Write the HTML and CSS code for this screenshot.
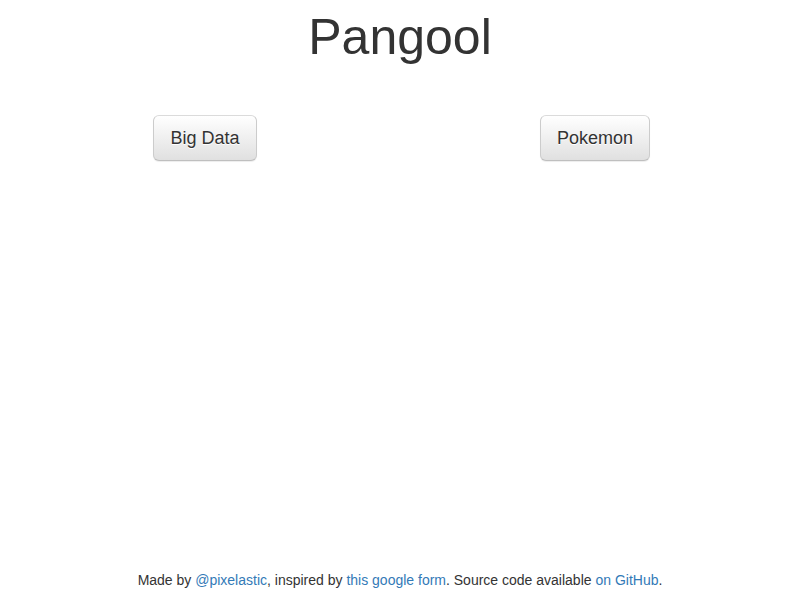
FILE: index.html
```html
<!DOCTYPE html>
<html lang="en">
<head>
<meta charset="utf-8">
<title>Pangool</title>
<link rel="stylesheet" href="styles.css">
</head>
<body>
<div class="page">
  <h1 class="title">Pangool</h1>
  <div class="choices">
    <div class="choice"><button class="btn">Big Data</button></div>
    <div class="choice"><button class="btn">Pokemon</button></div>
  </div>
  <footer class="footer">
    Made by <a href="#">@pixelastic</a>, inspired by <a href="#">this google form</a>. Source code available <a href="#">on GitHub</a>.
  </footer>
</div>
</body>
</html>
```

FILE: styles.css
```css
html, body {
  margin: 0;
  padding: 0;
  height: 100%;
  background: #fff;
}
body {
  font-family: "Liberation Sans", Arial, Helvetica, sans-serif;
  font-size: 14px;
  line-height: 1.428571;
  color: #333;
}
.page {
  height: 100%;
  display: flex;
  flex-direction: column;
}
.title {
  margin: 10px 0 0;
  font-size: 50px;
  font-weight: 400;
  line-height: 1.1;
  text-align: center;
  color: #333;
}
.choices {
  width: 780px;
  margin: 50px auto 0;
  display: grid;
  grid-template-columns: 1fr 1fr;
}
.choice {
  display: flex;
  justify-content: center;
}
.btn {
  font-family: inherit;
  font-size: 18px;
  line-height: 24px;
  padding: 10px 16px;
  color: #333;
  border: 1px solid #ccc;
  border-color: #dbdbdb #ccc #bfbfbf;
  border-radius: 6px;
  background-image: linear-gradient(to bottom, #fff 0%, #e0e0e0 100%);
  box-shadow: inset 0 1px 0 rgba(255,255,255,.15), 0 1px 1px rgba(0,0,0,.075);
  text-shadow: 0 1px 0 #fff;
  cursor: pointer;
}
.footer {
  margin-top: auto;
  padding-bottom: 9px;
  text-align: center;
}
.footer a {
  color: #337ab7;
  text-decoration: none;
}
```
